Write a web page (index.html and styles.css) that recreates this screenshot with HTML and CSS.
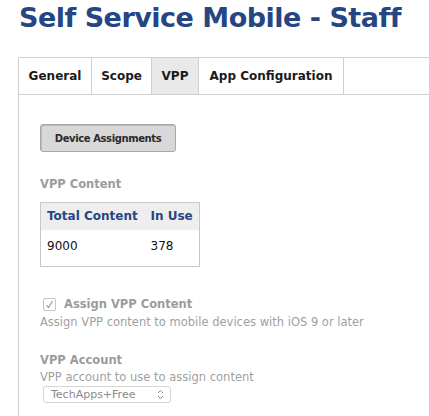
FILE: index.html
```html
<!DOCTYPE html>
<html>
<head>
<meta charset="utf-8">
<link rel="stylesheet" href="styles.css">
</head>
<body>
<div class="page">
  <h1 class="title">Self Service Mobile - Staff</h1>
  <div class="tabs">
    <div class="tab tab-general">General</div>
    <div class="tab tab-scope">Scope</div>
    <div class="tab tab-vpp active">VPP</div>
    <div class="tab tab-app">App Configuration</div>
  </div>
  <div class="panel">
    <button class="btn">Device Assignments</button>
    <div class="label vpp-label">VPP Content</div>
    <table class="content-table">
      <thead>
        <tr><th class="c1">Total Content</th><th>In Use</th></tr>
      </thead>
      <tbody>
        <tr><td class="c1">9000</td><td>378</td></tr>
      </tbody>
    </table>
    <div class="check-row">
      <span class="checkbox">
        <svg width="9" height="9" viewBox="0 0 9 9"><path d="M1.5 5 L3.5 7.5 L7.5 1" fill="none" stroke="#9a9a9a" stroke-width="1.2"/></svg>
      </span>
      <span class="label">Assign VPP Content</span>
    </div>
    <div class="desc">Assign VPP content to mobile devices with iOS 9 or later</div>
    <div class="label account-label">VPP Account</div>
    <div class="desc desc-account">VPP account to use to assign content</div>
    <div class="select">
      <span>TechApps+Free</span>
      <svg class="arrows" width="7" height="11" viewBox="0 0 7 11"><path d="M1 4 L3.5 1.5 L6 4 M1 7 L3.5 9.5 L6 7" fill="none" stroke="#8a8a8a" stroke-width="1"/></svg>
    </div>
  </div>
</div>
</body>
</html>
```

FILE: styles.css
```css
html, body {
  margin: 0;
  padding: 0;
  background: #fff;
}
body {
  font-family: "DejaVu Sans", Verdana, sans-serif;
  color: #222;
  overflow: hidden;
  height: 416px;
}
.page {
  padding-left: 18px;
}
.title {
  margin: 0;
  padding: 2px 0 0 1px;
  height: 55px;
  box-sizing: border-box;
  font-size: 27px;
  line-height: 32px;
  font-weight: bold;
  color: #254683;
  letter-spacing: -0.5px;
  white-space: nowrap;
}
.tabs {
  display: flex;
  height: 38px;
  box-sizing: border-box;
  border-top: 1px solid #cfcfcf;
  border-bottom: 1px solid #cfcfcf;
  border-left: 1px solid #cfcfcf;
  margin-top: 2px;
}
.tab {
  display: flex;
  align-items: center;
  justify-content: center;
  border-right: 1px solid #cfcfcf;
  font-size: 12px;
  font-weight: bold;
  color: #1a1a1a;
  white-space: nowrap;
}
.tab-general { width: 72px; }
.tab-scope { width: 59px; }
.tab-vpp { width: 46px; }
.tab-app { width: 144px; }
.tab.active {
  background: #e9e9e9;
}
.panel {
  border-left: 1px solid #cfcfcf;
  padding: 29px 0 0 21px;
  height: 330px;
  box-sizing: border-box;
  display: flex;
  flex-direction: column;
  align-items: flex-start;
}
.btn {
  width: 136px;
  height: 28px;
  flex-shrink: 0;
  background: #d8d8d8;
  border: 1px solid #a8a8a8;
  border-radius: 3px;
  box-shadow: inset 1px 1px 0 #b8b8b8;
  font-family: inherit;
  font-size: 10px;
  letter-spacing: -0.4px;
  font-weight: bold;
  color: #2a2a2a;
  padding: 0;
}
.label {
  font-size: 11.5px;
  font-weight: bold;
  color: #9b9b9b;
  white-space: nowrap;
}
.vpp-label {
  margin-top: 25px;
  line-height: 14px;
}
.content-table {
  margin-top: 11px;
  border: 1px solid #c8c8c8;
  border-collapse: collapse;
  width: 160px;
  font-size: 12px;
}
.content-table th {
  background: #eeeeee;
  color: #254683;
  font-weight: bold;
  text-align: left;
  height: 27px;
  padding: 0 0 0 6px;
  box-sizing: border-box;
  white-space: nowrap;
}
.content-table td {
  height: 37px;
  padding: 0 0 3px 6px;
  box-sizing: border-box;
  color: #111;
  white-space: nowrap;
}
.content-table .c1 {
  width: 104px;
}
.check-row {
  margin-top: 30px;
  display: flex;
  align-items: center;
  padding-left: 3px;
  height: 14px;
}
.checkbox {
  width: 11px;
  height: 11px;
  border: 1px solid #c4c4c4;
  border-radius: 2px;
  display: flex;
  align-items: center;
  justify-content: center;
  margin-right: 8px;
}
.desc {
  font-size: 11.5px;
  color: #a0a0a0;
  line-height: 16px;
  margin-top: 3px;
  white-space: nowrap;
}
.account-label {
  margin-top: 22px;
  line-height: 16px;
}
.desc-account {
  margin-top: 1px;
}
.select {
  margin-top: 1px;
  margin-left: 3px;
  width: 128px;
  height: 17px;
  flex-shrink: 0;
  border: 1px solid #d4d4d4;
  border-radius: 3px;
  display: flex;
  align-items: center;
  justify-content: space-between;
  padding: 0 6px 0 7px;
  box-sizing: border-box;
  font-size: 11px;
  color: #8a8a8a;
}
.arrows {
  display: block;
}
```
